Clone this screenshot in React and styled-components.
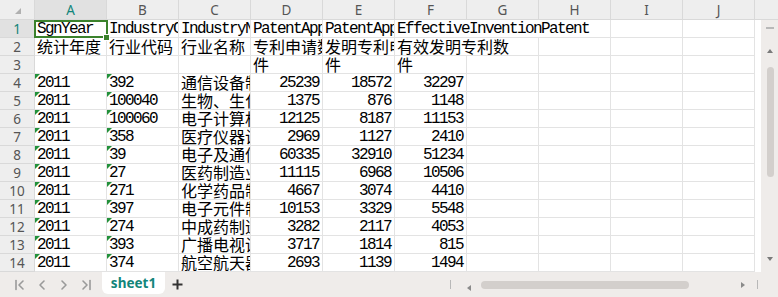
import React from 'react';
import styled, { createGlobalStyle, css } from 'styled-components';

const GlobalStyle = createGlobalStyle`
  html, body { margin: 0; padding: 0; background: #fff; overflow: hidden; }
  #root { width: 778px; height: 297px; }
`;

const Frame = styled.div`
  width: 778px;
  height: 297px;
  display: flex;
  flex-direction: column;
  background: #fff;
  font-family: "Noto Sans", sans-serif;
`;

const Main = styled.div`
  display: flex;
  height: 272px;
`;

const Sheet = styled.div`
  display: grid;
  grid-template-columns: 35px repeat(10, 72px);
  grid-template-rows: 20px repeat(14, 18px);
  width: 755px;
`;

const Corner = styled.div`
  box-sizing: border-box;
  background: #eeeeee;
  border-right: 1px solid #d9d9d9;
  border-bottom: 1px solid #d9d9d9;
  display: flex;
  align-items: flex-end;
  justify-content: flex-end;
  padding: 0 13px 5px 0;
`;

const HeadCell = styled.div`
  box-sizing: border-box;
  background: ${p => (p.$active ? '#e1e1e1' : '#eeeeee')};
  border-right: 1px solid #d9d9d9;
  border-bottom: 1px solid #d9d9d9;
  display: flex;
  align-items: center;
  justify-content: center;
  font-family: "Noto Sans", sans-serif;
  font-size: 13.5px;
  color: ${p => (p.$active ? '#12857a' : '#555')};
`;

const Cell = styled.div`
  position: relative;
  box-sizing: border-box;
  border-right: 1px solid #e3e3e3;
  border-bottom: 1px solid #e3e3e3;
  grid-column: span ${p => p.$span || 1};
  min-width: 0;
  ${p => p.$mark && css`
    &::before {
      content: '';
      position: absolute;
      top: 0;
      left: 0;
      border-top: 5px solid #22913a;
      border-right: 5px solid transparent;
      z-index: 1;
    }
  `}
  ${p => p.$active && css`
    z-index: 2;
    &::after {
      content: '';
      position: absolute;
      top: 0;
      left: -1px;
      right: -2px;
      bottom: -1px;
      border: 2px solid #3b822c;
      z-index: 3;
    }
  `}
`;

const Handle = styled.span`
  position: absolute;
  right: -4px;
  bottom: -4px;
  width: 5px;
  height: 5px;
  background: #3b822c;
  border: 1px solid #fff;
  z-index: 4;
`;

const CellText = styled.div`
  overflow: hidden;
  white-space: nowrap;
  height: 100%;
  padding: 0 2px;
  color: #000;
  text-align: ${p => (p.$right ? 'right' : 'left')};
  font-family: "Liberation Mono", monospace;
  font-size: 16px;
  letter-spacing: -1.6px;
  line-height: 17px;
  padding-top: 1px;
  box-sizing: border-box;
  ${p => p.$right && css`padding-right: 3px;`}
  ${p => p.$cjk && css`
    font-family: "Noto Sans CJK SC", sans-serif;
    font-size: 16px;
    letter-spacing: 0;
    line-height: 17px;
    padding-top: 0;
  `}
`;

const VScroll = styled.div`
  width: 23px;
  display: grid;
  grid-template-rows: 20px 1fr;
`;

const VHead = styled.div`
  background: #eeeeee;
  border-bottom: 1px solid #d9d9d9;
  box-sizing: border-box;
`;

const VBody = styled.div`
  display: flex;
  padding-left: 6px;
  background: #fff;
`;

const VTrack = styled.div`
  flex: 1;
  background: #efecea;
  display: flex;
  flex-direction: column;
  align-items: center;
  padding-top: 7px;
  padding-bottom: 10px;
`;

const Dash = styled.div`
  width: 8px;
  height: 2px;
  background: #b8b8b8;
  margin-left: 1px;
`;

const VThumb = styled.div`
  width: 7px;
  height: 110px;
  border-radius: 4px;
  background: #d3cfcc;
  margin-top: 8px;
  margin-left: 1px;
`;

const Spacer = styled.div`
  flex: 1;
`;

const BottomBar = styled.div`
  height: 25px;
  background: #efecea;
  display: flex;
  align-items: center;
`;

const NavGroup = styled.div`
  display: flex;
  padding-left: 9px;
`;

const NavButton = styled.div`
  width: 22px;
  height: 25px;
  display: flex;
  align-items: center;
  justify-content: center;
`;

const Tab = styled.div`
  align-self: flex-start;
  margin-left: 5px;
  width: 63px;
  height: 22px;
  background: #fff;
  border-radius: 0 0 6px 6px;
  display: flex;
  align-items: center;
  justify-content: center;
  font-family: "Noto Sans", sans-serif;
  font-weight: 700;
  font-size: 13.5px;
  color: #12857a;
  padding-bottom: 1px;
  box-sizing: border-box;
`;

const Plus = styled.div`
  margin-left: 7px;
  width: 11px;
  height: 25px;
  display: flex;
  align-items: center;
  justify-content: center;
`;

const HScroll = styled.div`
  margin-left: auto;
  width: 332px;
  height: 25px;
  display: flex;
  align-items: center;
  padding-left: 4px;
  padding-right: 20px;
  box-sizing: border-box;
`;

const Bar = styled.div`
  width: 1px;
  height: 9px;
  background: #b8b8b8;
`;

const HThumb = styled.div`
  width: 208px;
  height: 8px;
  border-radius: 4px;
  background: #d3cfcc;
  margin-left: 9px;
`;

const Tri = ({ dir, color = '#8a8a8a' }) => {
  const pts = {
    up: '0,5 3,1 6,5',
    down: '0,1 6,1 3,5',
    left: '5,0 5,6 1,3',
    right: '1,0 1,6 5,3',
  }[dir];
  return (
    <svg width="6" height="6" viewBox="0 0 6 6">
      <polygon points={pts} fill={color} />
    </svg>
  );
};

const NavIcon = ({ kind }) => {
  const stroke = '#9a9a9a';
  return (
    <svg width="12" height="12" viewBox="0 0 12 12" fill="none" stroke={stroke} strokeWidth="1.6" strokeLinecap="round" strokeLinejoin="round">
      {kind === 'first' && (<><line x1="2" y1="1.5" x2="2" y2="10.5" /><polyline points="9,2 5,6 9,10" /></>)}
      {kind === 'prev' && <polyline points="8,2 4,6 8,10" />}
      {kind === 'next' && <polyline points="4,2 8,6 4,10" />}
      {kind === 'last' && (<><polyline points="3,2 7,6 3,10" /><line x1="10" y1="1.5" x2="10" y2="10.5" /></>)}
    </svg>
  );
};

const COLS = ['A', 'B', 'C', 'D', 'E', 'F', 'G', 'H', 'I', 'J'];

const data = [
  ['392', '通信设备制造', 25239, 18572, 32297],
  ['100040', '生物、生化制品的制造', 1375, 876, 1148],
  ['100060', '电子计算机及办公设备制造', 12125, 8187, 11153],
  ['358', '医疗仪器设备及仪器仪表制造', 2969, 1127, 2410],
  ['39', '电子及通信设备制造', 60335, 32910, 51234],
  ['27', '医药制造业', 11115, 6968, 10506],
  ['271', '化学药品制造', 4667, 3074, 4410],
  ['397', '电子元件制造', 10153, 3329, 5548],
  ['274', '中成药制造', 3282, 2117, 4053],
  ['393', '广播电视设备制造', 3717, 1814, 815],
  ['374', '航空航天器制造', 2693, 1139, 1494],
];

const buildRows = () => {
  const rows = [];
  rows.push([
    { t: 'SgnYear', active: true },
    { t: 'IndustryCode' },
    { t: 'IndustryName' },
    { t: 'PatentApplications' },
    { t: 'PatentAppInvention' },
    { t: 'EffectiveInventionPatent', span: 3 },
    {}, {},
  ]);
  rows.push([
    { t: '统计年度', cjk: true },
    { t: '行业代码', cjk: true },
    { t: '行业名称', cjk: true },
    { t: '专利申请数', cjk: true },
    { t: '发明专利申请数', cjk: true },
    { t: '有效发明专利数', cjk: true, span: 2 },
    {}, {}, {},
  ]);
  rows.push([
    {}, {}, {},
    { t: '件', cjk: true },
    { t: '件', cjk: true },
    { t: '件', cjk: true },
    {}, {}, {}, {},
  ]);
  data.forEach(([code, name, a, b, c]) => {
    rows.push([
      { t: '2011', mark: true },
      { t: code, mark: true },
      { t: name, cjk: true },
      { t: String(a), right: true },
      { t: String(b), right: true },
      { t: String(c), right: true },
      {}, {}, {}, {},
    ]);
  });
  return rows;
};

export default function App() {
  const rows = buildRows();
  return (
    <>
      <GlobalStyle />
      <Frame>
        <Main>
          <Sheet>
            <Corner>
              <svg width="6" height="6" viewBox="0 0 6 6">
                <polygon points="6,0 6,6 0,6" fill="#b0b0b0" />
              </svg>
            </Corner>
            {COLS.map(c => (
              <HeadCell key={c} $active={c === 'A'}>{c}</HeadCell>
            ))}
            {rows.map((row, ri) => (
              <React.Fragment key={ri}>
                <HeadCell $active={ri === 0}>{ri + 1}</HeadCell>
                {row.map((cell, ci) => (
                  <Cell
                    key={ci}
                    $span={cell.span}
                    $mark={cell.mark}
                    $active={cell.active}
                  >
                    {cell.t && (
                      <CellText $cjk={cell.cjk} $right={cell.right}>{cell.t}</CellText>
                    )}
                    {cell.active && <Handle />}
                  </Cell>
                ))}
              </React.Fragment>
            ))}
          </Sheet>
          <VScroll>
            <VHead />
            <VBody>
              <VTrack>
                <Dash />
                <div style={{ marginTop: 8 }}><Tri dir="up" color="#7a7a7a" /></div>
                <VThumb />
                <Spacer />
                <Tri dir="down" color="#7a7a7a" />
              </VTrack>
            </VBody>
          </VScroll>
        </Main>
        <BottomBar>
          <NavGroup>
            <NavButton><NavIcon kind="first" /></NavButton>
            <NavButton><NavIcon kind="prev" /></NavButton>
            <NavButton><NavIcon kind="next" /></NavButton>
            <NavButton><NavIcon kind="last" /></NavButton>
          </NavGroup>
          <Tab>sheet1</Tab>
          <Plus>
            <svg width="11" height="11" viewBox="0 0 11 11" stroke="#333" strokeWidth="2">
              <line x1="5.5" y1="0.5" x2="5.5" y2="10.5" />
              <line x1="0.5" y1="5.5" x2="10.5" y2="5.5" />
            </svg>
          </Plus>
          <HScroll>
            <Bar />
            <div style={{ marginLeft: 15 }}><Tri dir="left" /></div>
            <HThumb />
            <Spacer />
            <Tri dir="right" />
            <div style={{ marginLeft: 11 }}><Bar /></div>
          </HScroll>
        </BottomBar>
      </Frame>
    </>
  );
}
